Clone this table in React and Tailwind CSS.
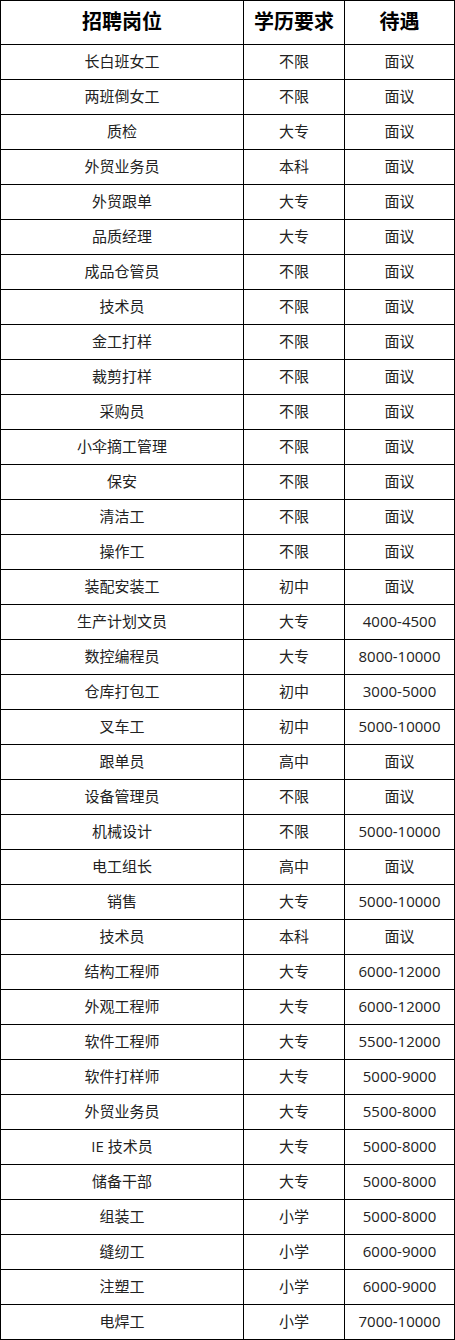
import React from "react";

const rows = [
  ["长白班女工", "不限", "面议"],
  ["两班倒女工", "不限", "面议"],
  ["质检", "大专", "面议"],
  ["外贸业务员", "本科", "面议"],
  ["外贸跟单", "大专", "面议"],
  ["品质经理", "大专", "面议"],
  ["成品仓管员", "不限", "面议"],
  ["技术员", "不限", "面议"],
  ["金工打样", "不限", "面议"],
  ["裁剪打样", "不限", "面议"],
  ["采购员", "不限", "面议"],
  ["小伞摘工管理", "不限", "面议"],
  ["保安", "不限", "面议"],
  ["清洁工", "不限", "面议"],
  ["操作工", "不限", "面议"],
  ["装配安装工", "初中", "面议"],
  ["生产计划文员", "大专", "4000-4500"],
  ["数控编程员", "大专", "8000-10000"],
  ["仓库打包工", "初中", "3000-5000"],
  ["叉车工", "初中", "5000-10000"],
  ["跟单员", "高中", "面议"],
  ["设备管理员", "不限", "面议"],
  ["机械设计", "不限", "5000-10000"],
  ["电工组长", "高中", "面议"],
  ["销售", "大专", "5000-10000"],
  ["技术员", "本科", "面议"],
  ["结构工程师", "大专", "6000-12000"],
  ["外观工程师", "大专", "6000-12000"],
  ["软件工程师", "大专", "5500-12000"],
  ["软件打样师", "大专", "5000-9000"],
  ["外贸业务员", "大专", "5500-8000"],
  ["IE 技术员", "大专", "5000-8000"],
  ["储备干部", "大专", "5000-8000"],
  ["组装工", "小学", "5000-8000"],
  ["缝纫工", "小学", "6000-9000"],
  ["注塑工", "小学", "6000-9000"],
  ["电焊工", "小学", "7000-10000"],
];

const font = {
  fontFamily: '"Open Sans", "Noto Sans CJK SC", sans-serif',
};

export default function App() {
  return (
    <div
      className="w-[455px] bg-white border-l border-t border-black grid grid-cols-[243px_101px_110px] text-[#222]"
      style={font}
    >
      {["招聘岗位", "学历要求", "待遇"].map((h) => (
        <div
          key={h}
          className="h-[44px] pb-[2px] border-r border-b border-black flex items-center justify-center text-[20px] font-bold text-black leading-none"
        >
          {h}
        </div>
      ))}
      {rows.map((r, i) =>
        r.map((c, j) => (
          <div
            key={i + "-" + j}
            className="h-[35px] pb-[2px] border-r border-b border-black flex items-center justify-center text-[15px] leading-none"
          >
            {c}
          </div>
        ))
      )}
    </div>
  );
}
